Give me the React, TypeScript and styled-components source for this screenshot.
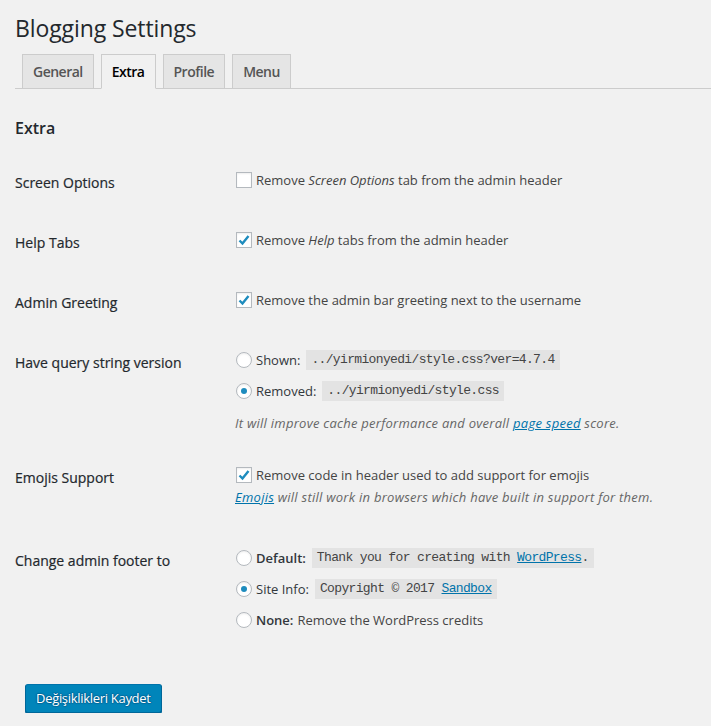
import styled, { createGlobalStyle } from "styled-components";

const GlobalStyle = createGlobalStyle`
  body {
    margin: 0;
    background: #f1f1f1;
    font-family: "Open Sans", "Noto Sans", sans-serif;
    color: #444;
    font-size: 13px;
  }
`;

const Page = styled.div`
  padding: 0 0 0 15px;
`;

const Title = styled.h1`
  margin: 0;
  padding-top: 14px;
  font-size: 23px;
  line-height: 29px;
  font-weight: 400;
  letter-spacing: -0.1px;
  color: #23282d;
`;

const TabBar = styled.div`
  display: flex;
  gap: 7px;
  margin-top: 11px;
  padding-left: 7px;
  border-bottom: 1px solid #ccc;
`;

const Tab = styled.div<{ $active?: boolean }>`
  height: 33px;
  padding: 0 10px;
  display: flex;
  align-items: center;
  font-size: 14px;
  font-weight: 600;
  letter-spacing: -0.5px;
  border: 1px solid #ccc;
  margin-bottom: -1px;
  background: ${(p) => (p.$active ? "#f1f1f1" : "#e5e5e5")};
  color: ${(p) => (p.$active ? "#000" : "#555")};
  border-bottom-color: ${(p) => (p.$active ? "#f1f1f1" : "#ccc")};
`;

const Section = styled.h2`
  margin: 0;
  padding-top: 28px;
  font-size: 16px;
  line-height: 22px;
  font-weight: 600;
  color: #23282d;
`;

const Table = styled.div`
  margin-top: 15px;
`;

const Row = styled.div`
  display: grid;
  grid-template-columns: 220px 1fr;
  align-items: start;
`;

const Label = styled.div`
  padding-top: 19px;
  font-size: 14px;
  line-height: 20px;
  font-weight: 400;
  -webkit-text-stroke: 0.2px #23282d;
  color: #23282d;
`;

const Field = styled.div<{ $bottom: number }>`
  padding: 16px 0 ${(p) => p.$bottom}px;
  display: flex;
  flex-direction: column;
`;

const Line = styled.label<{ $gap?: number }>`
  display: flex;
  align-items: center;
  height: 20px;
  margin-top: ${(p) => p.$gap ?? 0}px;
  line-height: 20px;
  white-space: nowrap;
`;

const Box = styled.span`
  width: 16px;
  height: 16px;
  box-sizing: border-box;
  border: 1px solid #b4b9be;
  background: #fff;
  box-shadow: inset 0 1px 2px rgba(0, 0, 0, 0.07);
  margin: 0 4px 0 1px;
  display: flex;
  align-items: center;
  justify-content: center;
  flex: none;
`;

const Radio = styled(Box)`
  border-radius: 50%;
`;

const Dot = styled.span`
  width: 6px;
  height: 6px;
  border-radius: 50%;
  background: #1e8cbe;
`;

const Strong = styled.span<{ $bold?: boolean; $space?: number }>`
  font-weight: ${(p) => (p.$bold ? 600 : 400)};
  color: #32373c;
  margin-right: ${(p) => p.$space ?? 6}px;
`;

const Code = styled.code`
  font-family: "Liberation Mono", monospace;
  font-size: 13px;
  letter-spacing: -0.65px;
  background: #e3e3e3;
  padding: 0 5px;
  line-height: 20px;
  color: #444;
`;

const Link = styled.a`
  color: #0073aa;
  text-decoration: underline;
`;

const Desc = styled.div<{ $gap: number }>`
  margin-top: ${(p) => p.$gap}px;
  font-style: italic;
  letter-spacing: 0.26px;
  color: #666;
  line-height: 20px;
  white-space: nowrap;
`;

const Submit = styled.div`
  padding: 54px 0 0 10px;
`;

const Button = styled.button`
  height: 29px;
  padding: 0 10px 1px;
  font-family: inherit;
  font-size: 13px;
  letter-spacing: -0.3px;
  color: #fff;
  background: #0085ba;
  border: 1px solid #0073aa;
  border-color: #0073aa #006799 #006799;
  border-radius: 3px;
  box-shadow: 0 1px 0 #006799;
  text-shadow: 0 -1px 1px #006799, 1px 0 1px #006799, 0 1px 1px #006799,
    -1px 0 1px #006799;
`;

function Check({ on }: { on?: boolean }) {
  return (
    <Box>
      {on && (
        <svg width="14" height="14" viewBox="0 0 14 14">
          <path d="M2.5 7.5 L5.5 10.5 L11.5 3" fill="none" stroke="#1e8cbe" strokeWidth="2.4" />
        </svg>
      )}
    </Box>
  );
}

function Option({ on }: { on?: boolean }) {
  return <Radio>{on && <Dot />}</Radio>;
}

export default function App() {
  return (
    <>
      <GlobalStyle />
      <Page>
        <Title>Blogging Settings</Title>
        <TabBar>
          <Tab>General</Tab>
          <Tab $active>Extra</Tab>
          <Tab>Profile</Tab>
          <Tab>Menu</Tab>
        </TabBar>
        <Section>Extra</Section>
        <Table>
          <Row>
            <Label>Screen Options</Label>
            <Field $bottom={24}>
              <Line>
                <Check />
                Remove&nbsp;<i>Screen Options</i>&nbsp;tab from the admin header
              </Line>
            </Field>
          </Row>
          <Row>
            <Label>Help Tabs</Label>
            <Field $bottom={24}>
              <Line>
                <Check on />
                Remove&nbsp;<i>Help</i>&nbsp;tabs from the admin header
              </Line>
            </Field>
          </Row>
          <Row>
            <Label>Admin Greeting</Label>
            <Field $bottom={24}>
              <Line>
                <Check on />
                Remove the admin bar greeting next to the username
              </Line>
            </Field>
          </Row>
          <Row>
            <Label>Have query string version</Label>
            <Field $bottom={16}>
              <Line>
                <Option />
                <Strong>Shown:</Strong>
                <Code>../yirmionyedi/style.css?ver=4.7.4</Code>
              </Line>
              <Line $gap={11}>
                <Option on />
                <Strong>Removed:</Strong>
                <Code>../yirmionyedi/style.css</Code>
              </Line>
              <Desc $gap={12}>
                It will improve cache performance and overall <Link>page speed</Link> score.
              </Desc>
            </Field>
          </Row>
          <Row>
            <Label>Emojis Support</Label>
            <Field $bottom={25}>
              <Line>
                <Check on />
                Remove code in header used to add support for emojis
              </Line>
              <Desc $gap={2}>
                <Link>Emojis</Link> will still work in browsers which have built in support for them.
              </Desc>
            </Field>
          </Row>
          <Row>
            <Label>Change admin footer to</Label>
            <Field $bottom={0}>
              <Line>
                <Option />
                <Strong $bold>Default:</Strong>
                <Code>
                  Thank you for creating with <Link>WordPress</Link>.
                </Code>
              </Line>
              <Line $gap={11}>
                <Option on />
                <Strong>Site Info:</Strong>
                <Code>
                  Copyright © 2017 <Link>Sandbox</Link>
                </Code>
              </Line>
              <Line $gap={11}>
                <Option />
                <Strong $bold $space={4}>None:</Strong>Remove the WordPress credits
              </Line>
            </Field>
          </Row>
        </Table>
        <Submit>
          <Button>Değişiklikleri Kaydet</Button>
        </Submit>
      </Page>
    </>
  );
}
